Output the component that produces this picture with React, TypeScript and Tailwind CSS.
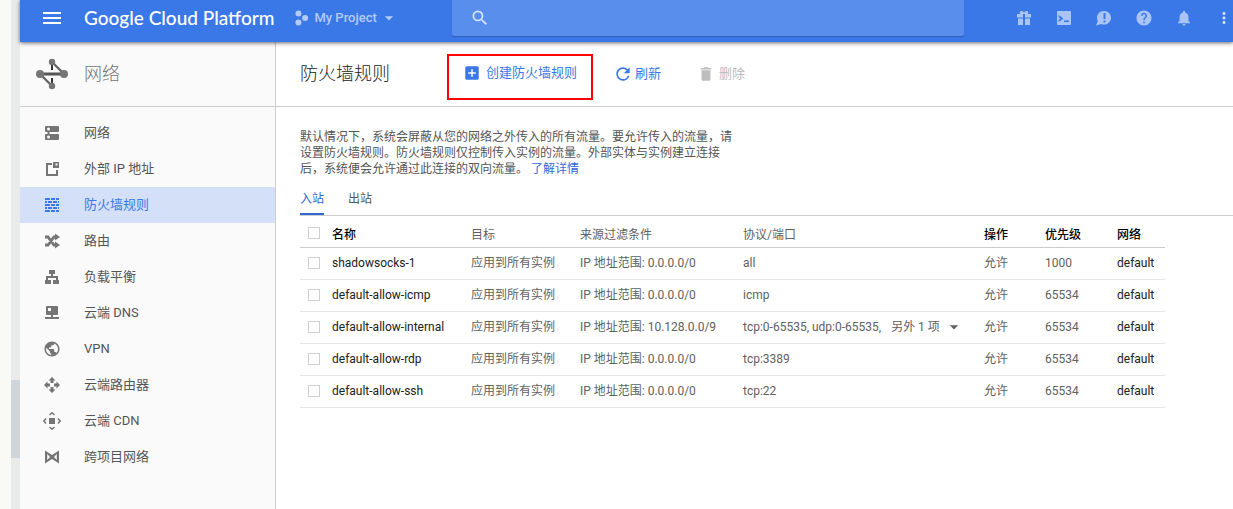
import { ReactNode } from "react";
import {
  MdAddBox,
  MdArrowDropDown,
  MdDelete,
  MdHelp,
  MdMenu,
  MdMoreVert,
  MdNotifications,
  MdPublic,
  MdRefresh,
  MdSearch,
} from "react-icons/md";

const Glyph = ({ children, className = "size-[18px]" }: { children: ReactNode; className?: string }) => (
  <svg viewBox="0 0 18 18" fill="currentColor" className={className} aria-hidden="true">
    {children}
  </svg>
);

const nav = [
  {
    label: "网络",
    icon: (
      <Glyph>
        <path fillRule="evenodd" d="M3 2h12a1 1 0 0 1 1 1v4a1 1 0 0 1-1 1H6.500v2H15a1 1 0 0 1 1 1v4a1 1 0 0 1-1 1H3a1 1 0 0 1-1-1v-4a1 1 0 0 1 1-1h1.500V8H3a1 1 0 0 1-1-1V3a1 1 0 0 1 1-1zm2.500 1.500a1.500 1.500 0 1 0 0 3 1.500 1.500 0 0 0 0-3zm0 8a1.500 1.500 0 1 0 0 3 1.500 1.500 0 0 0 0-3z" />
      </Glyph>
    ),
  },
  {
    label: "外部 IP 地址",
    icon: (
      <Glyph>
        <path fillRule="evenodd" d="M3 3h6v2H5v9h8v-4h2v6H3zM10 2h6v6h-6zm2.500 1.500v2h2v-2z" />
      </Glyph>
    ),
  },
  {
    label: "防火墙规则",
    active: true,
    icon: (
      <Glyph>
        <path d="M2 2h5v2H2zM8 2h4v2H8zM13 2h3v2h-3zM2 5h2v2H2zM5 5h4v2H5zM10 5h4v2h-4zM15 5h1v2h-1zM2 8h5v2H2zM8 8h4v2H8zM13 8h3v2h-3zM2 11h2v2H2zM5 11h4v2H5zM10 11h4v2h-4zM15 11h1v2h-1zM2 14h5v2H2zM8 14h4v2H8zM13 14h3v2h-3z" />
      </Glyph>
    ),
  },
  {
    label: "路由",
    icon: (
      <Glyph>
        <path d="M2 5h3l6 8h2M2 13h3l6-8h2" fill="none" stroke="currentColor" strokeWidth="2.800" />
        <path d="m12 1.500 5 3.500-5 3.500zM12 9.500l5 3.500-5 3.500z" />
      </Glyph>
    ),
  },
  {
    label: "负载平衡",
    icon: (
      <Glyph>
        <path d="M6 2h6v4h-2v2h5v4h1v4h-6v-4h3v-2H5v2h3v4H2v-4h1V8h5V6H6z" />
      </Glyph>
    ),
  },
  {
    label: "云端 DNS",
    icon: (
      <Glyph>
        <path fillRule="evenodd" d="M4 2h10a1 1 0 0 1 1 1v7a1 1 0 0 1-1 1h-4v2h6v2H2v-2h6v-2H4a1 1 0 0 1-1-1V3a1 1 0 0 1 1-1zm1 2v3h3V4z" />
      </Glyph>
    ),
  },
  { label: "VPN", icon: <MdPublic className="size-[18px]" /> },
  {
    label: "云端路由器",
    icon: (
      <Glyph>
        <path d="m9 1 3.500 3.500H10.500V7h-3V4.500H5.500zM9 17l-3.500-3.500h2V11h3v2.500h2zM1 9l3.500-3.500v2H7v3H4.500v2zM17 9l-3.500 3.500v-2H11v-3h2.500v-2z" />
      </Glyph>
    ),
  },
  {
    label: "云端 CDN",
    icon: (
      <Glyph>
        <path d="M6 6h6v6H6z" />
        <path d="M6.500 3 9 .8 11.500 3M6.500 15 9 17.200 11.500 15M3 6.500.8 9 3 11.500M15 6.500 17.200 9 15 11.500" fill="none" stroke="currentColor" strokeWidth="1.500" />
      </Glyph>
    ),
  },
  {
    label: "跨项目网络",
    icon: (
      <Glyph>
        <path fillRule="evenodd" d="M2 2.500l7 4.500 7-4.500v13L9 11l-7 4.500zM4.200 6v6L7 9zM13.800 6L11 9l2.800 3z" />
      </Glyph>
    ),
  },
];

const rules = [
  { name: "shadowsocks-1", range: "0.0.0.0/0", ports: "all", priority: 1000 },
  { name: "default-allow-icmp", range: "0.0.0.0/0", ports: "icmp", priority: 65534 },
  { name: "default-allow-internal", range: "10.128.0.0/9", ports: "tcp:0-65535, udp:0-65535,", more: "另外 1 项", priority: 65534 },
  { name: "default-allow-rdp", range: "0.0.0.0/0", ports: "tcp:3389", priority: 65534 },
  { name: "default-allow-ssh", range: "0.0.0.0/0", ports: "tcp:22", priority: 65534 },
];

const Checkbox = ({ label }: { label: string }) => (
  <input
    type="checkbox"
    aria-label={label}
    className="ml-2 block size-3 appearance-none border border-[#cfcfcf] bg-white checked:bg-[#3b78e7]"
  />
);

const headerIcons = [
  {
    label: "礼品",
    icon: (
      <Glyph>
        <path d="M2 5h3.200C4 3.500 5 2 6.500 2 7.800 2 8.500 3 9 3.600 9.500 3 10.200 2 11.500 2 13 2 14 3.500 12.800 5H16v3.500h-6V5H8v3.500H2zM3 9.500h5V16H3zM10 9.500h5V16h-5z" />
      </Glyph>
    ),
  },
  {
    label: "Cloud Shell",
    icon: (
      <Glyph>
        <path fillRule="evenodd" d="M3 2h12a1 1 0 0 1 1 1v12a1 1 0 0 1-1 1H3a1 1 0 0 1-1-1V3a1 1 0 0 1 1-1zm.500 4v2l2 1.500-2 1.500v2L8 10V9zM9 11.500V13h5v-1.500z" />
      </Glyph>
    ),
  },
  {
    label: "反馈",
    icon: (
      <Glyph>
        <path fillRule="evenodd" d="M9.500 2a7 6.800 0 1 1-3.300 13L1 16.500 2.800 12A7 6.800 0 0 1 9.500 2zM8.500 4v6h2V4zm0 7.500v2h2v-2z" />
      </Glyph>
    ),
  },
  { label: "帮助", icon: <MdHelp className="size-[18px]" /> },
  { label: "通知", icon: <MdNotifications className="size-[18px]" /> },
];

const Header = () => (
  <header className="relative z-10 flex h-[42px] shrink-0 bg-[#3b78e7] text-white shadow-[0_1px_4px_rgba(0,0,0,0.6)]">
    <div className="flex h-9 w-[432px] shrink-0 items-center">
      <button aria-label="菜单" className="ml-5">
        <MdMenu className="size-6" />
      </button>
      <a href="#" className="ml-5 font-[Lato] text-[19px] font-medium whitespace-nowrap">
        Google Cloud Platform
      </a>
      <button className="ml-5 flex items-center text-[13px] font-medium text-[#b3cbf6]">
        <Glyph className="mr-1 size-4">
          <circle cx="5" cy="4" r="3.400" />
          <circle cx="12.500" cy="9" r="3.400" />
          <circle cx="5" cy="14" r="3.400" />
        </Glyph>
        My Project
        <MdArrowDropDown className="ml-0.5 size-5" />
      </button>
    </div>
    <label className="flex h-9 max-w-[512px] flex-1 items-center rounded-b-xs bg-[#5a8eed] pl-[18px] shadow-[0_1px_1px_rgba(0,0,0,0.2)]">
      <MdSearch className="size-5 text-[#d6e3fb]" />
      <input type="search" aria-label="搜索" className="ml-3 min-w-0 flex-1 bg-transparent text-sm outline-none" />
    </label>
    <div className="ml-auto flex h-9 items-center gap-[22px] pl-6 text-[#a9c4f5]">
      {headerIcons.map((item) => (
        <button key={item.label} aria-label={item.label}>
          {item.icon}
        </button>
      ))}
      <button aria-label="更多" className="text-[#d6e3fb]">
        <MdMoreVert className="size-[18px]" />
      </button>
    </div>
  </header>
);

const Sidebar = () => (
  <aside className="w-64 shrink-0 border-r border-[#ccc] bg-[#fafafa]">
    <div className="flex h-[65px] items-center border-b border-[#ccc] pl-4">
      <svg viewBox="0 0 32 32" className="size-8 text-[#757575]" fill="currentColor" stroke="currentColor">
        <path d="M16 4v8M16 20v8" strokeWidth="2" stroke="#333" />
        <path d="m16 4 12 12M4 16l12 12" strokeWidth="2.400" stroke="#666" />
        <path d="M4 16h24" strokeWidth="3" stroke="#555" />
        <g stroke="none">
          <circle cx="16" cy="4" r="3.200" />
          <circle cx="28" cy="16" r="4" />
          <circle cx="4" cy="16" r="4" />
          <circle cx="16" cy="28" r="3.200" />
        </g>
      </svg>
      <h2 className="ml-4 text-[18px] leading-6 font-light text-[#757575]">网络</h2>
    </div>
    <nav className="py-2">
      {nav.map((item) => (
        <a
          key={item.label}
          href="#"
          className={`flex h-9 items-center gap-[23px] pl-[23px] text-[13px] ${
            item.active ? "bg-[#d4e0f7] text-[#3b78e7]" : "text-[#555]"
          }`}
        >
          <span className={item.active ? "" : "text-[#757575]"}>{item.icon}</span>
          {item.label}
        </a>
      ))}
    </nav>
  </aside>
);

const Rules = () => (
  <table className="w-full max-w-[865px] table-fixed text-left text-[12px] text-[#616161]">
    <colgroup>
      <col className="w-8" />
      <col className="w-[139px]" />
      <col className="w-[109px]" />
      <col className="w-[163px]" />
      <col />
      <col className="w-[61px]" />
      <col className="w-[72px]" />
      <col className="w-12" />
    </colgroup>
    <thead>
      <tr className="h-[31px] border-b border-[#ccc] whitespace-nowrap">
        <th className="pt-1"><Checkbox label="全选" /></th>
        <th className="pt-2 font-medium text-black">名称</th>
        <th className="pt-2 font-normal">目标</th>
        <th className="pt-2 font-normal">来源过滤条件</th>
        <th className="pt-2 font-normal">协议/端口</th>
        <th className="pt-2 font-medium text-black">操作</th>
        <th className="pt-2 font-medium text-black">优先级</th>
        <th className="pt-2 font-medium text-black">网络</th>
      </tr>
    </thead>
    <tbody>
      {rules.map((rule) => (
        <tr key={rule.name} className="h-8 border-b border-[#e5e5e5] whitespace-nowrap">
          <td><Checkbox label={rule.name} /></td>
          <td className="text-[#212121]">{rule.name}</td>
          <td>应用到所有实例</td>
          <td>IP 地址范围: {rule.range}</td>
          <td>
            <div className="flex items-center">
              {rule.ports}
              {rule.more && (
                <button className="ml-2.5 flex items-center gap-1">
                  {rule.more}
                  <MdArrowDropDown className="size-5" />
                </button>
              )}
            </div>
          </td>
          <td>允许</td>
          <td>{rule.priority}</td>
          <td className="text-[#212121]">default</td>
        </tr>
      ))}
    </tbody>
  </table>
);

const App = () => (
  <div className="flex min-h-screen bg-white font-[Roboto,'Noto_Sans_CJK_SC',sans-serif]">
    <div className="w-[11px] shrink-0 bg-[#f9faf5]" />
    <div className="w-[9px] shrink-0 bg-[#e9ebea] pt-[380px]">
      <div className="h-[78px] bg-[#ced6dc]" />
    </div>
    <div className="flex min-w-0 flex-1 flex-col">
      <Header />
      <div className="flex flex-1">
        <Sidebar />
        <main className="min-w-0 flex-1">
          <div className="flex h-[65px] items-center border-b border-[#ccc] pl-6 text-[13px] text-[#3b78e7]">
            <h1 className="mr-[57px] text-[18px] leading-6 font-light text-[#212121]">防火墙规则</h1>
            <button className="mt-1.5 flex h-[46px] items-center gap-[5px] border-2 border-[#f00] px-3.5 pb-2">
              <MdAddBox className="size-[18px]" />
              创建防火墙规则
            </button>
            <button className="ml-5 flex items-center gap-0.5">
              <MdRefresh className="size-5" />
              刷新
            </button>
            <button disabled className="ml-9 flex items-center gap-1 text-[#bdbdbd]">
              <MdDelete className="size-[18px]" />
              删除
            </button>
          </div>
          <div className="pt-[22px] pl-6">
            <p className="max-w-[440px] text-[12px] leading-4 text-[#555]">
              默认情况下，系统会屏蔽从您的网络之外传入的所有流量。要允许传入的流量，请设置防火墙规则。防火墙规则仅控制传入实例的流量。外部实体与实例建立连接后，系统便会允许通过此连接的双向流量。{" "}
              <a href="#" className="text-[#3367d6]">了解详情</a>
            </p>
            <div role="tablist" className="flex h-[39px] gap-6 border-b border-[#ccc] text-[12px] text-[#555]">
              <button role="tab" aria-selected="true" className="border-b-2 border-[#3367d6] pt-2 text-[#3367d6]">
                入站
              </button>
              <button role="tab" aria-selected="false" className="border-b-2 border-transparent pt-2">
                出站
              </button>
            </div>
            <Rules />
          </div>
        </main>
      </div>
    </div>
  </div>
);

export default App;
